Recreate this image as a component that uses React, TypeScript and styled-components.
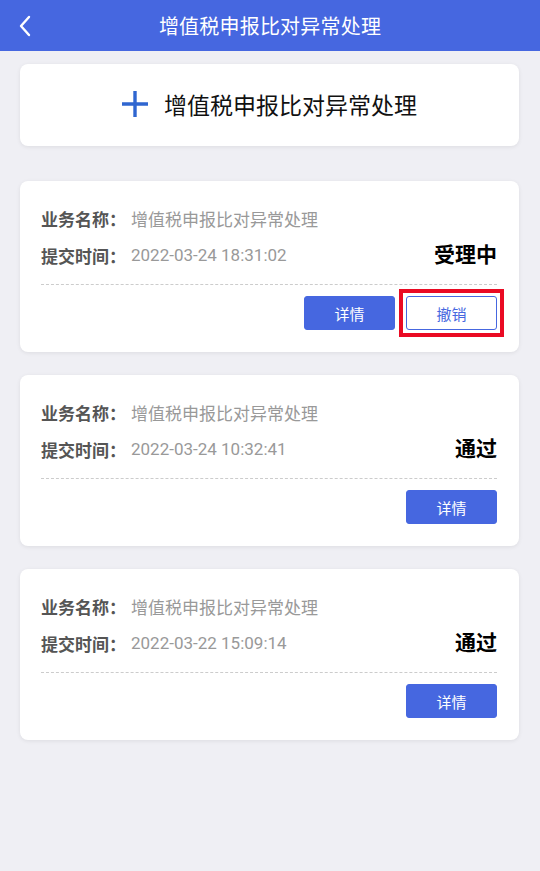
import React from 'react';
import styled, { createGlobalStyle } from 'styled-components';

const GlobalStyle = createGlobalStyle`
  html, body {
    margin: 0;
    padding: 0;
    background: #efeff4;
    font-family: Roboto, "Noto Sans CJK SC", sans-serif;
  }
`;

const Page = styled.div`
  min-height: 871px;
  background: #efeff4;
`;

const Header = styled.div`
  height: 51px;
  background: #4667e0;
  display: flex;
  align-items: center;
  justify-content: center;
  position: relative;
`;

const BackButton = styled.div`
  position: absolute;
  left: 14px;
  top: 13px;
  width: 22px;
  height: 26px;
  display: flex;
  align-items: center;
  justify-content: center;
`;

const HeaderTitle = styled.div`
  color: #fff;
  font-size: 20px;
  letter-spacing: 0.2px;
`;

const Content = styled.div`
  padding: 13px 21px 0 20px;
  display: flex;
  flex-direction: column;
`;

const Card = styled.div`
  background: #fff;
  border-radius: 8px;
  box-shadow: 0 1px 4px rgba(0, 0, 0, 0.08);
`;

const AddCard = styled(Card)`
  height: 82px;
  display: flex;
  align-items: center;
  justify-content: center;
  gap: 16px;
  margin-bottom: 35px;
  font-size: 23px;
  color: #111;
  padding-bottom: 2px;
  box-sizing: border-box;
`;

const RecordCard = styled(Card)`
  padding: 24px 22px 22px 21px;
  margin-bottom: 23px;
`;

const Row = styled.div`
  display: flex;
  align-items: center;
  height: 26px;
  font-size: 17px;
`;

const TimeRow = styled(Row)`
  margin-top: 11px;
`;

const Label = styled.span`
  color: #555;
  font-weight: bold;
  width: 90px;
`;

const Value = styled.span`
  color: #999;
  flex: 1;
`;

const Status = styled.span`
  color: #000;
  font-size: 21px;
  font-weight: bold;
  margin-top: -4px;
`;

const Divider = styled.div`
  border-top: 1px dashed #ccc;
  margin-top: 16px;
`;

const Actions = styled.div`
  display: flex;
  justify-content: flex-end;
  gap: 11px;
  margin-top: 11px;
`;

const Button = styled.button<{ $outline?: boolean; $marked?: boolean }>`
  position: relative;
  width: 91px;
  height: 34px;
  border-radius: 3px;
  font-family: inherit;
  font-size: 15px;
  cursor: pointer;
  background: ${p => (p.$outline ? '#fff' : '#4667e0')};
  color: ${p => (p.$outline ? '#4667e0' : '#fff')};
  border: 1px solid #4667e0;

  &::after {
    content: '';
    display: ${p => (p.$marked ? 'block' : 'none')};
    position: absolute;
    inset: -8px;
    border: 4px solid #ea0a23;
  }
`;

const records = [
  { time: '2022-03-24 18:31:02', status: '受理中', cancel: true },
  { time: '2022-03-24 10:32:41', status: '通过', cancel: false },
  { time: '2022-03-22 15:09:14', status: '通过', cancel: false },
];

export default function App() {
  return (
    <Page>
      <GlobalStyle />
      <Header>
        <BackButton>
          <svg width="14" height="22" viewBox="0 0 14 22">
            <path d="M11 2 L3 11 L11 20" fill="none" stroke="#fff" strokeWidth="2.4" strokeLinecap="round" strokeLinejoin="round" />
          </svg>
        </BackButton>
        <HeaderTitle>增值税申报比对异常处理</HeaderTitle>
      </Header>
      <Content>
        <AddCard>
          <svg width="26" height="26" viewBox="0 0 26 26">
            <path d="M13 0 V26 M0 13 H26" stroke="#2f66d0" strokeWidth="3.4" />
          </svg>
          <span>增值税申报比对异常处理</span>
        </AddCard>
        {records.map(r => (
          <RecordCard key={r.time}>
            <Row>
              <Label>业务名称：</Label>
              <Value>增值税申报比对异常处理</Value>
            </Row>
            <TimeRow>
              <Label>提交时间：</Label>
              <Value>{r.time}</Value>
              <Status>{r.status}</Status>
            </TimeRow>
            <Divider />
            <Actions>
              <Button>详情</Button>
              {r.cancel && (
                <Button $outline $marked>
                  撤销
                </Button>
              )}
            </Actions>
          </RecordCard>
        ))}
      </Content>
    </Page>
  );
}
